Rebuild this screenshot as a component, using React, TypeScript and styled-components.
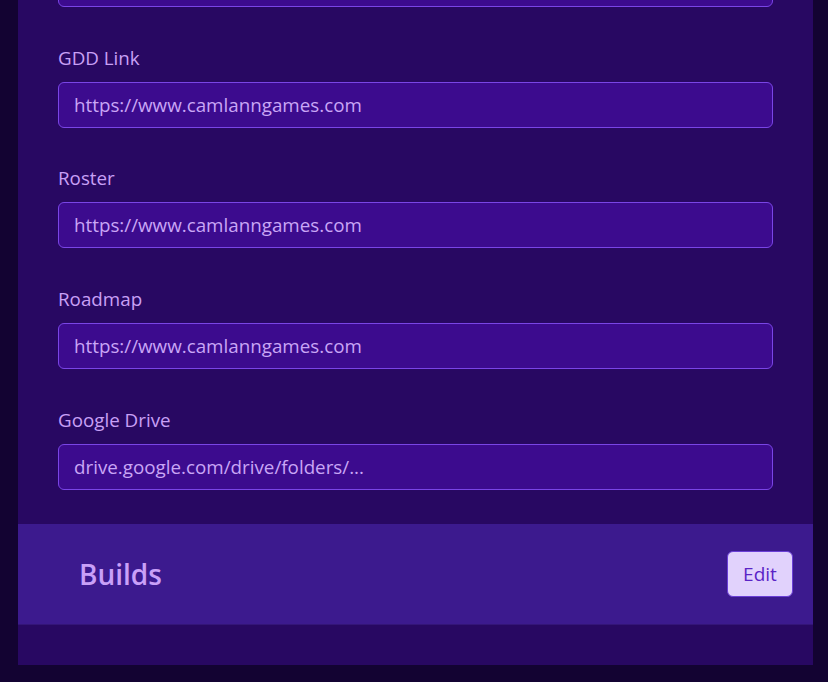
import styled, { createGlobalStyle } from 'styled-components'
import { useLayoutEffect, useRef } from 'react'

const GlobalStyle = createGlobalStyle`
  html, body {
    margin: 0;
    padding: 0;
    background: #130332;
    font-family: 'Open Sans', 'Noto Sans', sans-serif;
  }
  * {
    box-sizing: border-box;
  }
`

const Viewport = styled.div`
  height: 100vh;
  overflow: hidden;
  padding: 0 15px 17px 18px;
`

const Panel = styled.section`
  background: #280862;
`

const Form = styled.div`
  padding: 24px 40px 34px;
  display: flex;
  flex-direction: column;
  gap: 36.67px;
`

const Field = styled.label`
  display: flex;
  flex-direction: column;
  gap: 10px;
`

const Label = styled.span`
  color: #c8a0f6;
  font-size: 18.8px;
  line-height: 28px;
`

const Input = styled.input`
  height: 46px;
  width: 100%;
  padding: 0 15px;
  border: 1px solid #7a45e6;
  border-radius: 6px;
  background: #3c0b8e;
  color: #c9a6f6;
  font-family: inherit;
  font-size: 18.8px;
  outline: none;
`

const SectionHeader = styled.div`
  height: 101px;
  background: #3c1a8e;
  display: flex;
  align-items: center;
  justify-content: space-between;
  padding: 0 20px 0 61px;
  border-bottom: 1px solid #341578;
`

const SectionTitle = styled.h2`
  margin: 0;
  color: #c9a0f8;
  font-size: 28px;
  font-weight: 600;
`

const EditButton = styled.button`
  height: 46px;
  width: 66px;
  border: 1px solid #6a3fd6;
  border-radius: 6px;
  background: #e1d2fc;
  color: #5a24c6;
  font-family: inherit;
  font-size: 19px;
  cursor: pointer;
`

const SectionBody = styled.div`
  height: 40px;
`

const links = [
  { label: 'Website', value: 'https://www.camlanngames.com' },
  { label: 'GDD Link', value: 'https://www.camlanngames.com' },
  { label: 'Roster', value: 'https://www.camlanngames.com' },
  { label: 'Roadmap', value: 'https://www.camlanngames.com' },
  { label: 'Google Drive', value: 'drive.google.com/drive/folders/...' },
]

const App = () => {
  const ref = useRef<HTMLDivElement>(null)
  useLayoutEffect(() => {
    if (ref.current) ref.current.scrollTop = ref.current.scrollHeight
  }, [])
  return (
    <>
      <GlobalStyle />
      <Viewport ref={ref}>
        <Panel>
          <Form>
            {links.map(l => (
              <Field key={l.label}>
                <Label>{l.label}</Label>
                <Input defaultValue={l.value} />
              </Field>
            ))}
          </Form>
          <SectionHeader>
            <SectionTitle>Builds</SectionTitle>
            <EditButton>Edit</EditButton>
          </SectionHeader>
          <SectionBody />
        </Panel>
      </Viewport>
    </>
  )
}

export default App
